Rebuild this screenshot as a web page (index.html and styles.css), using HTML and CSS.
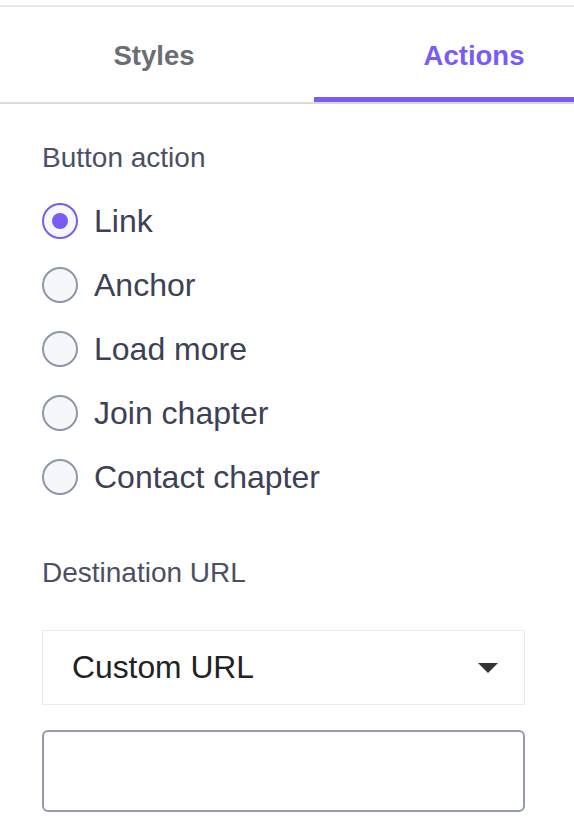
FILE: index.html
```html
<!DOCTYPE html>
<html lang="en">
<head>
<meta charset="utf-8">
<title>Button settings</title>
<link rel="stylesheet" href="styles.css">
</head>
<body>
<div class="panel">
  <div class="tabs">
    <div class="tab tab-styles">Styles</div>
    <div class="tab tab-actions active">Actions</div>
  </div>
  <div class="content">
    <div class="label label-action">Button action</div>
    <div class="radios">
      <div class="radio-row"><span class="radio checked"></span><span class="radio-text">Link</span></div>
      <div class="radio-row"><span class="radio"></span><span class="radio-text">Anchor</span></div>
      <div class="radio-row"><span class="radio"></span><span class="radio-text">Load more</span></div>
      <div class="radio-row"><span class="radio"></span><span class="radio-text">Join chapter</span></div>
      <div class="radio-row"><span class="radio"></span><span class="radio-text">Contact chapter</span></div>
    </div>
    <div class="label label-dest">Destination URL</div>
    <div class="select">
      <span class="select-text">Custom URL</span>
      <svg class="caret" width="20" height="10" viewBox="0 0 20 10"><path d="M0 0 H20 L10 10 Z" fill="#333"/></svg>
    </div>
    <div class="text-input"></div>
  </div>
</div>
</body>
</html>
```
FILE: styles.css
```css
* { box-sizing: border-box; }
html, body { margin: 0; padding: 0; background: #fff; }
body { overflow: hidden; font-family: "Liberation Sans", Arial, sans-serif; }

.panel { padding-top: 5px; }

.tabs {
  display: flex;
  border-top: 2px solid #e6e9f5;
  border-bottom: 2px solid #dadada;
  overflow: hidden;
}
.tab {
  font-weight: bold;
  font-size: 27.5px;
  line-height: 32px;
  text-align: center;
  padding-top: 33px;
  padding-bottom: 25px;
  border-bottom: 5px solid transparent;
  color: #6b6d75;
  flex-shrink: 0;
}
.tab-styles { flex: 0 0 314px; padding-right: 6px; }
.tab-actions { flex: 0 0 320px; }
.tab.active { color: #7b5bf6; border-bottom-color: #7b5bf6; }

.content { padding: 0 49px 0 42px; }

.label {
  font-size: 28px;
  line-height: 32px;
  color: #4b5065;
}
.label-action { margin-top: 38px; }
.radios { margin-top: 15px; }
.radio-row {
  display: flex;
  align-items: center;
  height: 64px;
}
.radio {
  width: 36px;
  height: 36px;
  border-radius: 50%;
  border: 2px solid #8f97a8;
  background: #f6f7fb;
  display: flex;
  align-items: center;
  justify-content: center;
  flex: 0 0 36px;
}
.radio.checked { border-color: #7b5bf6; }
.radio.checked::after {
  content: "";
  width: 16px;
  height: 16px;
  border-radius: 50%;
  background: #7b5bf6;
}
.radio-text {
  margin-left: 16px;
  font-size: 32px;
  line-height: 36px;
  color: #3d4155;
}
.label-dest { margin-top: 48px; }

.select {
  margin-top: 41px;
  height: 75px;
  border: 1px solid #ebebeb;
  display: flex;
  align-items: center;
  justify-content: space-between;
  padding: 0 26px 0 29px;
}
.select-text {
  font-size: 31.8px;
  color: #222;
}
.text-input {
  margin-top: 25px;
  height: 82px;
  border: 2px solid #929aab;
  border-radius: 6px;
}
```
